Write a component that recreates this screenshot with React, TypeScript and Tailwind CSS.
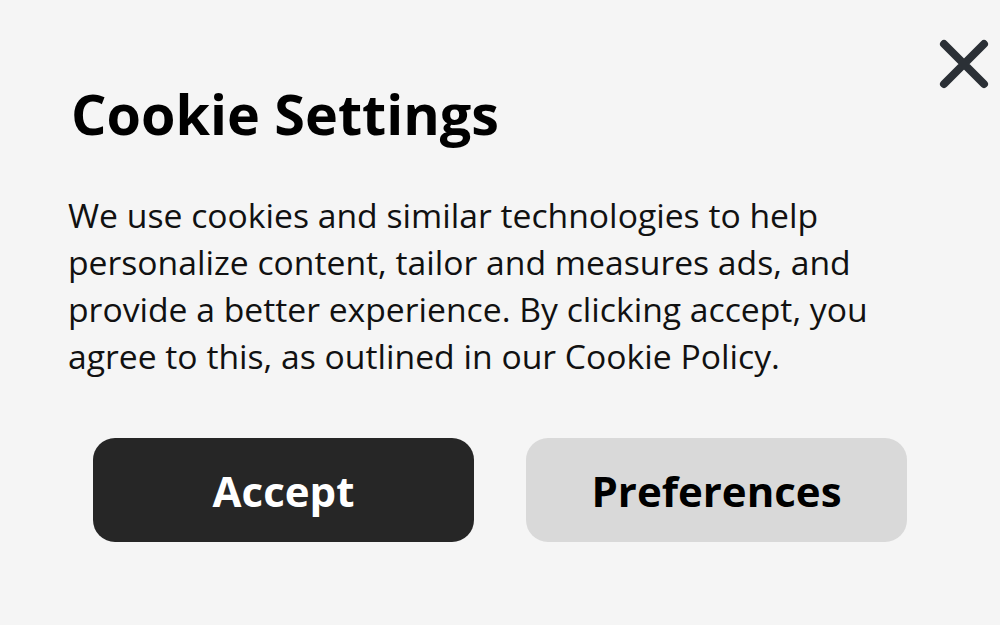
import React from "react";

export default function App() {
  return (
    <div className="relative w-[1000px] h-[625px] bg-[#f5f5f5] overflow-hidden" style={{ fontFamily: '"Open Sans", sans-serif' }}>
      <button className="absolute left-[937px] top-[37px] w-[54px] h-[54px] flex items-center justify-center">
        <svg width="54" height="54" viewBox="0 0 54 54" fill="none">
          <path d="M7 7L47 47M47 7L7 47" stroke="#2b3036" strokeWidth="8" strokeLinecap="round" />
        </svg>
      </button>
      <div className="pt-[75px] px-[68px]">
        <h1 className="text-[55.7px] font-bold text-black leading-[76px] pl-[3px]">Cookie Settings</h1>
        <p className="mt-[41px] text-[33.7px] leading-[47px] text-[#111] w-[820px]">
          We use cookies and similar technologies to help personalize content, tailor and measures ads, and provide a better experience. By clicking accept, you agree to this, as outlined in our Cookie Policy.
        </p>
      </div>
      <div className="mt-[58px] px-[93px] flex gap-[52px]">
        <button className="flex-1 h-[104px] rounded-[22px] bg-[#262626] text-white text-[42px] font-bold">Accept</button>
        <button className="flex-1 h-[104px] rounded-[22px] bg-[#d9d9d9] text-black text-[42px] font-bold">Preferences</button>
      </div>
    </div>
  );
}
